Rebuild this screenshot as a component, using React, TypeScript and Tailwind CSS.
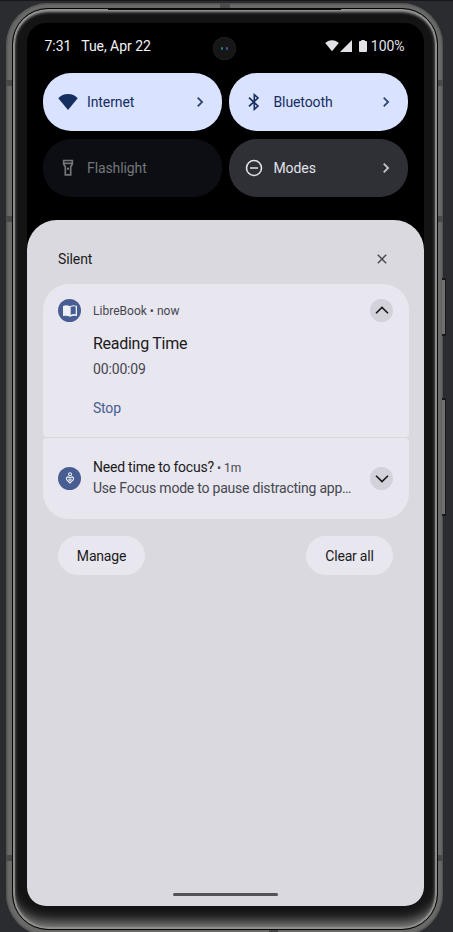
import React from "react";

function Chevron({ className }: { className: string }) {
  return (
    <svg viewBox="0 0 10 12" className={"h-3 w-2.5 " + className} fill="none" stroke="currentColor" strokeWidth="1.8">
      <path d="M2.7 1.7 7.1 6 2.7 10.3" />
    </svg>
  );
}

function WifiIcon({ className }: { className: string }) {
  return (
    <svg viewBox="0 0 20 16" className={className} fill="currentColor">
      <path d="M10 16 .3 4.2C2.6 1.6 6 0 10 0s7.4 1.6 9.7 4.2Z" />
    </svg>
  );
}

function BluetoothIcon() {
  return (
    <svg viewBox="0 0 14 18" className="h-[18px] w-3.5" fill="none" stroke="currentColor" strokeWidth="1.6">
      <path d="m2 4.7 9 8.3-3.700 3.300V1.700L11 5l-9 8.300" />
    </svg>
  );
}

function FlashlightIcon() {
  return (
    <svg viewBox="0 0 12 18" className="h-[18px] w-3" fill="none" stroke="currentColor" strokeWidth="1.7">
      <path d="M1.700 1.500h8.600v3.700L8.700 7.700v8.100H3.300V7.700L1.700 5.200ZM1.700 4.300h8.600" />
      <circle cx="6" cy="9.800" r="1.200" fill="currentColor" stroke="none" />
    </svg>
  );
}

function ModesIcon() {
  return (
    <svg viewBox="0 0 18 18" className="size-[18px]" fill="none" stroke="currentColor" strokeWidth="1.6">
      <circle cx="9" cy="9" r="7.500" />
      <path d="M5 9h8" />
    </svg>
  );
}

type TileProps = { label: string; icon: React.ReactNode; tone: string; arrow?: string };

function Tile({ label, icon, tone, arrow }: TileProps) {
  return (
    <div className={"flex h-[58px] items-center rounded-[28px] pl-[13px] pr-[17px] " + tone}>
      <div className="flex w-6 justify-center">{icon}</div>
      <span className="ml-[7.5px] mt-px flex-1 text-[14px] tracking-[-0.1px]">{label}</span>
      {arrow && <Chevron className={arrow} />}
    </div>
  );
}

function Expand({ up }: { up?: boolean }) {
  return (
    <div className="flex size-[23px] items-center justify-center rounded-full bg-[#d3d1d9]">
      <svg viewBox="0 0 14 10" className="h-2.5 w-3.5" fill="none" stroke="#17171b" strokeWidth="1.6">
        <path d={up ? "M1 7.300 7 1.400l6 5.900" : "M1 2.700 7 8.600l6-5.900"} />
      </svg>
    </div>
  );
}

function StatusBar() {
  return (
    <div className="grid h-[50px] grid-cols-[1fr_23px_1fr] items-center pl-[17.5px] pr-[19.5px] text-[14px] leading-[46px] text-[#f2f2f5]">
      <div className="-mt-1 flex gap-2.5 whitespace-nowrap">
        <span className="tracking-[-0.05px]">7:31</span>
        <span className="tracking-[-0.05px]">Tue, Apr 22</span>
      </div>
      <div className="mt-px flex size-[23px] items-center justify-center gap-[3px] rounded-full bg-[#161616] ring-1 ring-inset ring-[#1d1d1d]">
        <i className="h-[3px] w-[2px] rounded-full bg-[#277d78]" />
        <i className="h-[3px] w-[2px] rounded-full bg-[#3e58a8]" />
      </div>
      <div className="-mt-1 flex items-center justify-end text-[#e2e2e9]">
        <WifiIcon className="h-[11.5px] w-3.5" />
        <svg viewBox="0 0 12 12" className="ml-[1.5px] size-3" fill="currentColor">
          <path d="M12 0v12H0Z" />
        </svg>
        <svg viewBox="0 0 8 12" className="ml-[6.5px] h-3 w-2" fill="currentColor">
          <path d="M2.300 0h3.400v1H7q1 0 1 1v9q0 1-1 1H1q-1 0-1-1V2q0-1 1-1h1.300Z" />
        </svg>
        <span className="ml-1 tracking-[-0.05px]">100%</span>
      </div>
    </div>
  );
}

function Notifications() {
  return (
    <section className="mt-[23px] flex flex-1 flex-col rounded-t-[30px] bg-[#dad9df] px-[15.5px] text-[#1a1b20]">
      <div className="flex h-16 items-center justify-between px-[15.5px] pt-[14px]">
        <h2 className="text-[14px] tracking-[-0.1px]">Silent</h2>
        <svg viewBox="0 0 10 10" className="mr-[6px] size-2.5" fill="none" stroke="#45464c" strokeWidth="1.4">
          <path d="m.8.8 8.400 8.400M9.200.8.8 9.200" />
        </svg>
      </div>
      <article className="flex h-[152.5px] rounded-b-[4px] rounded-t-[26px] bg-[#e8e6ef] px-[15.5px] pt-[15px]">
        <div className="flex size-[23px] items-center justify-center rounded-full bg-[#485d92]">
          <svg viewBox="0 0 14 12" className="h-3 w-3.5">
            <path fill="#eeeef5" d="M0 1q3.500-1.600 7 .2Q10.500-.6 14 1v10q-3.500-1-7 .8Q3.500 10 0 11Z" />
            <path fill="#485d92" d="M7.700 2Q10 .9 12.700 1.600v7.600Q10 8.700 7.700 9.800Z" />
          </svg>
        </div>
        <div className="ml-3 flex flex-1 flex-col">
          <div className="mt-[4px] text-[12px] leading-4 tracking-[0.02px] text-[#46464f]">LibreBook • now</div>
          <div className="mt-[15px] text-[16px] leading-5 tracking-[-0.27px]">Reading Time</div>
          <div className="mt-[6px] text-[14px] leading-[18px] tracking-[-0.15px] text-[#46464f]">00:00:09</div>
          <div className="mt-[21px] text-[14px] leading-[18px] tracking-[-0.2px] text-[#485d92]">Stop</div>
        </div>
        <Expand up />
      </article>
      <article className="mt-[1.5px] flex h-[80.5px] items-center rounded-b-[26px] rounded-t-[4px] bg-[#e8e6ef] px-[15.5px]">
        <div className="flex size-[23px] items-center justify-center rounded-full bg-[#485d92]">
          <svg viewBox="0 0 10 12" className="h-3 w-2.5" fill="none" stroke="#eeeef5" strokeWidth="1.1">
            <circle cx="5" cy="2.300" r="1.500" />
            <path d="M5 11 1.700 7.600Q.8 5.200 3 4.900q1.300 0 2 1.300.7-1.300 2-1.300 2.200.3 1.300 2.700Z" />
            <path d="m3.500 7.300 1.500 1.200 1.500-1.200" />
          </svg>
        </div>
        <div className="-mt-px ml-3 flex-1 whitespace-nowrap text-[14px] leading-5 tracking-[-0.22px]">
          <div>
            Need time to focus? <span className="text-[12px] tracking-normal text-[#46464f]">• 1m</span>
          </div>
          <div className="text-[#46464f]">Use Focus mode to pause distracting app…</div>
        </div>
        <Expand />
      </article>
      <div className="mt-[17.5px] flex justify-between px-[15.5px] text-[14px] tracking-[-0.2px]">
        <button className="h-[39px] w-[87px] rounded-full bg-[#e8e6ef] pt-px">Manage</button>
        <button className="h-[39px] w-[87px] rounded-full bg-[#e8e6ef] pt-px">Clear all</button>
      </div>
      <div className="mb-[10px] mt-auto h-[3px] w-[105px] self-center rounded-full bg-[#535257]" />
    </section>
  );
}

export default function App() {
  return (
    <main className="relative h-[932px] w-[453px] overflow-hidden border-t border-[#17181b] bg-[#2b2c30] font-['Roboto',sans-serif]">
      <div className="absolute left-[442px] top-[277px] h-[58px] w-[4px] border-y-2 border-r border-[#17181a] bg-[#70706f]" />
      <div className="absolute left-[442px] top-[397px] h-[118px] w-[4px] border-y-2 border-r border-[#17181a] bg-[#70706f]" />
      <div className="ml-[6px] mt-[2px] h-[933px] w-[437px] rounded-[42px] bg-[#6a6a69] pl-[6px] pr-[5px] pt-[5px] shadow-[inset_0_0_2px_1px_#4a4a4a]">
        <div className="h-[922px] rounded-[36px] border border-[#080808] bg-[#141414] pl-[14px] pr-[13px] pt-[14px] shadow-[inset_0_0_1px_2px_#90908f,inset_0_4px_3px_-1px_#858585,inset_0_-16px_12px_-8px_#7c7c7b,inset_0_0_3px_3px_#454545]">
          <div className="flex h-[883px] w-[397px] flex-col overflow-hidden rounded-[19px] bg-black">
            <StatusBar />
            <div className="grid grid-cols-2 gap-x-[7.5px] gap-y-2 pl-[15.5px] pr-4">
              <Tile label="Internet" icon={<WifiIcon className="h-4 w-5" />} tone="bg-[#d9e2ff] text-[#152e60]" arrow="text-[#304678]" />
              <Tile label="Bluetooth" icon={<BluetoothIcon />} tone="bg-[#d9e2ff] text-[#152e60]" arrow="text-[#304678]" />
              <Tile label="Flashlight" icon={<FlashlightIcon />} tone="bg-[#0c0e13] text-[#75767a]" />
              <Tile label="Modes" icon={<ModesIcon />} tone="bg-[#2f3036] text-[#e2e2e9]" arrow="text-[#c5c6d0]" />
            </div>
            <Notifications />
          </div>
        </div>
      </div>
      {/* Speaker slit and antenna bands over the metal rim */}
      <div className="absolute left-[108px] top-[8px] h-px w-[233px] bg-[#0c0c0c]" />
      <div className="absolute left-[220px] top-[2px] h-[5px] w-[10px] bg-[#4c4c4c]" />
      <div className="absolute left-[269px] top-[929px] h-[3px] w-[9px] bg-[#444]" />
      <div className="absolute left-[6px] top-[79px] h-[6px] w-[6px] bg-[#4a4a4a]" />
      <div className="absolute left-[6px] top-[215px] h-[6px] w-[6px] bg-[#4a4a4a]" />
      <div className="absolute left-[6px] top-[854px] h-[6px] w-[6px] bg-[#4a4a4a]" />
      <div className="absolute left-[438px] top-[79px] h-[6px] w-[5px] bg-[#4a4a4a]" />
      <div className="absolute left-[438px] top-[215px] h-[6px] w-[5px] bg-[#4a4a4a]" />
      <div className="absolute left-[438px] top-[854px] h-[6px] w-[5px] bg-[#4a4a4a]" />
    </main>
  );
}
